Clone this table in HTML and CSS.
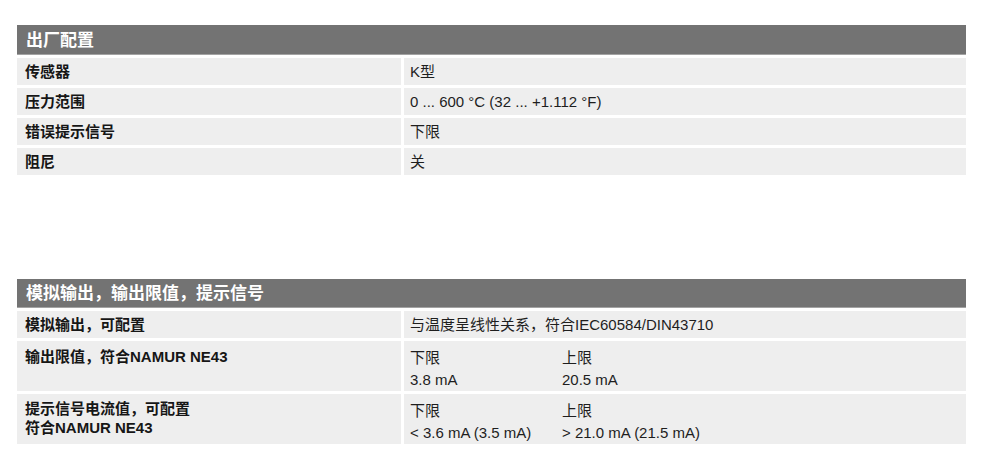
FILE: index.html
```html
<!DOCTYPE html>
<html lang="zh-CN">
<head>
<meta charset="utf-8">
<title>出厂配置</title>
<link rel="stylesheet" href="styles.css">
</head>
<body>
<div class="page">
  <section class="spec spec-first">
    <div class="spec-head">出厂配置</div>
    <div class="spec-grid">
      <div class="cell label">传感器</div>
      <div class="cell value">K型</div>
      <div class="cell label">压力范围</div>
      <div class="cell value">0 ... 600 °C (32 ... +1.112 °F)</div>
      <div class="cell label">错误提示信号</div>
      <div class="cell value">下限</div>
      <div class="cell label">阻尼</div>
      <div class="cell value">关</div>
    </div>
  </section>

  <section class="spec spec-second">
    <div class="spec-head">模拟输出，输出限值，提示信号</div>
    <div class="spec-grid">
      <div class="cell label">模拟输出，可配置</div>
      <div class="cell value">与温度呈线性关系，符合IEC60584/DIN43710</div>
      <div class="cell label tall">输出限值，符合NAMUR NE43</div>
      <div class="cell value tall">
        <div class="pair">
          <span>下限</span><span>上限</span>
          <span>3.8 mA</span><span>20.5 mA</span>
        </div>
      </div>
      <div class="cell label tall multi">提示信号电流值，可配置<br>符合NAMUR NE43</div>
      <div class="cell value tall">
        <div class="pair">
          <span>下限</span><span>上限</span>
          <span>&lt; 3.6 mA (3.5 mA)</span><span>&gt; 21.0 mA (21.5 mA)</span>
        </div>
      </div>
    </div>
  </section>
</div>
</body>
</html>
```

FILE: styles.css
```css
html, body {
  margin: 0;
  padding: 0;
  background: #ffffff;
}

body {
  font-family: "Liberation Sans", "Noto Sans CJK SC", sans-serif;
  color: #161616;
}

.page {
  width: 949px;
  margin-left: 17px;
  padding-top: 25px;
}

.spec-second {
  margin-top: 104px;
}

.spec-head {
  height: 29px;
  background: #737373;
  border-bottom: 1px solid #a3a3a3;
  color: #ffffff;
  font-weight: bold;
  font-size: 17px;
  line-height: 31px;
  padding-left: 9px;
  margin-bottom: 3px;
}

.spec-second .spec-head {
  height: 28px;
  line-height: 30px;
}

.spec-grid {
  display: grid;
  grid-template-columns: 384px 1fr;
  column-gap: 3px;
  row-gap: 3px;
}

.cell {
  background: #eeeeee;
  font-size: 15px;
  line-height: 21px;
  padding: 3px 0 3px 8px;
  min-height: 21px;
}

.label {
  font-weight: bold;
}

.value {
  padding-left: 6px;
  color: #1e1e1e;
}

.tall {
  padding-top: 5px;
  padding-bottom: 1px;
  min-height: 44px;
}

.label.multi {
  line-height: 19px;
  padding-top: 5px;
}

.pair {
  display: grid;
  grid-template-columns: 152px auto;
  grid-auto-rows: 22px;
  align-items: center;
}
```
